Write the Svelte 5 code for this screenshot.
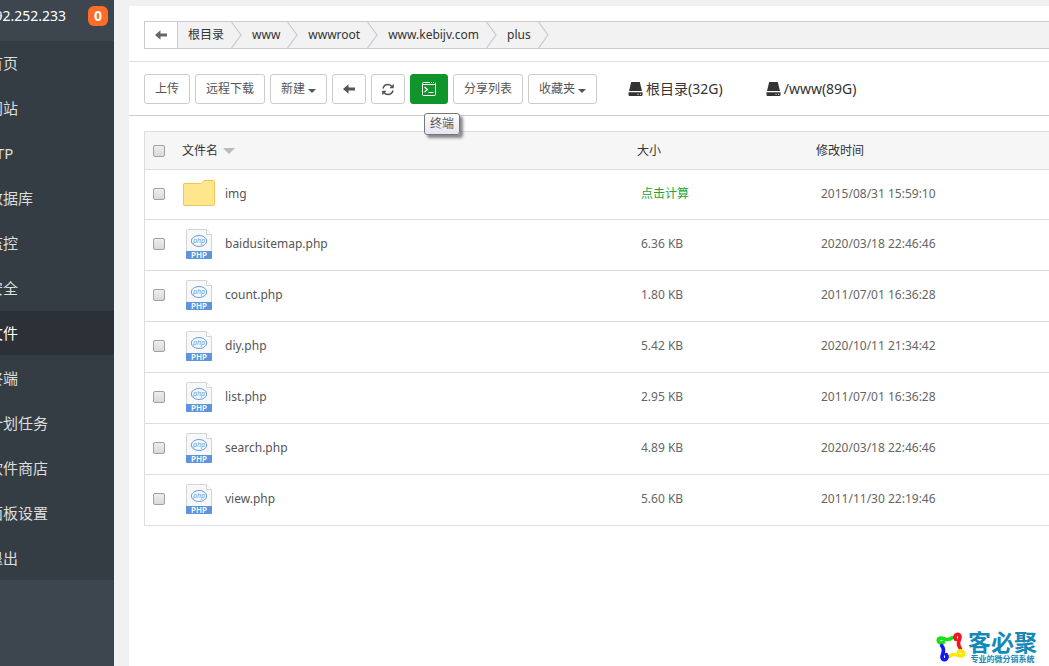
<script lang="ts">
	interface FileRow {
		name: string;
		dir?: boolean;
		size?: string;
		time: string;
	}

	const MENU = ['首页', '网站', 'FTP', '数据库', '监控', '安全', '文件', '终端', '计划任务', '软件商店', '面板设置', '退出'];

	const CRUMBS = ['根目录', 'www', 'wwwroot', 'www.kebijv.com', 'plus'];

	const DISKS = ['根目录(32G)', '/www(89G)'];

	const FILES: FileRow[] = [
		{ name: 'img', dir: true, time: '2015/08/31 15:59:10' },
		{ name: 'baidusitemap.php', size: '6.36 KB', time: '2020/03/18 22:46:46' },
		{ name: 'count.php', size: '1.80 KB', time: '2011/07/01 16:36:28' },
		{ name: 'diy.php', size: '5.42 KB', time: '2020/10/11 21:34:42' },
		{ name: 'list.php', size: '2.95 KB', time: '2011/07/01 16:36:28' },
		{ name: 'search.php', size: '4.89 KB', time: '2020/03/18 22:46:46' },
		{ name: 'view.php', size: '5.60 KB', time: '2011/11/30 22:19:46' },
	];

	// one arm of the pinwheel logo, turned a quarter for each colour
	const LOGO_ARM = 'M40 52C30 58 20 48 27 41C38 32 48 54 67 38';
	const LOGO_COLORS = ['#16e016', '#ee1620', '#ffe800', '#1616f0'];

	let current = $state('文件');
	let selected = $state<string[]>([]);

	function toggleAll() {
		selected = selected.length === FILES.length ? [] : FILES.map((f) => f.name);
	}
</script>

{#snippet arrowLeft()}
	<svg width="12" height="10" viewBox="0 0 12 10" fill="currentColor">
		<path d="M0 5L5.5 0.2V3.4H12V6.6H5.5V9.8Z" />
	</svg>
{/snippet}

<div class="layout">
	<aside class="sidebar">
		<div class="host">
			<span class="ip">92.252.233</span>
			<span class="badge">0</span>
		</div>
		<nav class="menu">
			{#each MENU as item}
				<a href="#{item}" class:active={current === item} onclick={() => (current = item)}>{item}</a>
			{/each}
		</nav>
	</aside>

	<main class="content">
		<div class="path-bar">
			<div class="path">
				<button class="path-back" aria-label="返回">{@render arrowLeft()}</button>
				{#each CRUMBS as crumb}
					<a class="crumb" href="#{crumb}">{crumb}</a>
					<svg class="chevron" width="11" height="26" viewBox="0 0 11 26" fill="none" stroke="#c9c9d3" stroke-width="1.2">
						<path d="M0.5 0L10 13L0.5 26" />
					</svg>
				{/each}
			</div>
		</div>

		<div class="toolbar">
			<button class="btn">上传</button>
			<button class="btn">远程下载</button>
			<button class="btn">新建<span class="caret"></span></button>
			<button class="btn" aria-label="后退">{@render arrowLeft()}</button>
			<button class="btn" aria-label="刷新">
				<svg width="12" height="13" viewBox="0 0 12 13" fill="none" stroke="currentColor" stroke-width="1.5">
					<path d="M1 5.5C1.6 3.2 3.5 1.6 6 1.6C7.8 1.6 9.2 2.4 10.2 3.8" />
					<path d="M11 7.5C10.4 9.8 8.5 11.4 6 11.4C4.2 11.4 2.8 10.6 1.8 9.2" />
					<path d="M11.8 0.8V5.2H7.4ZM0.2 12.2V7.8H4.6Z" fill="currentColor" stroke="none" />
				</svg>
			</button>
			<div class="terminal">
				<button class="btn btn-green" aria-label="终端">
					<svg width="16" height="16" viewBox="0 0 16 16" fill="none" stroke="currentColor">
						<rect x="1.5" y="1.5" width="13" height="13" rx="1" />
						<path d="M1.5 3.5H14.5" />
						<path d="M9 1.5H10M11 1.5H12M13 1.5H14" stroke="#10952a" />
						<path d="M3.5 6L6.5 8.5L3.5 11M7.5 11.5H12.5" stroke-width="1.2" />
					</svg>
				</button>
				<span class="tooltip" role="tooltip">终端</span>
			</div>
			<button class="btn">分享列表</button>
			<button class="btn">收藏夹<span class="caret"></span></button>
			<div class="disks">
				{#each DISKS as disk}
					<a class="disk" href="#{disk}">
						<svg width="15" height="14" viewBox="0 0 15 14" fill="#333">
							<path d="M3.2 0H11.8L14 9H1Z" />
							<path d="M0.5 10.2H14.5V13Q14.5 14 13.5 14H1.5Q0.5 14 0.5 13Z" />
							<path d="M9.5 11.8H10.6V12.8H9.5ZM12 11.8H13.1V12.8H12Z" fill="#fff" />
						</svg>
						{disk}
					</a>
				{/each}
			</div>
		</div>

		<div class="list">
			<table>
				<thead>
					<tr>
						<th class="col-check">
							<input type="checkbox" aria-label="全选" checked={selected.length === FILES.length} onchange={toggleAll} />
						</th>
						<th class="col-name">文件名<span class="sort"></span></th>
						<th class="col-size">大小</th>
						<th>修改时间</th>
					</tr>
				</thead>
				<tbody>
					{#each FILES as file}
						<tr class:dir={file.dir}>
							<td class="col-check">
								<input type="checkbox" aria-label={file.name} value={file.name} bind:group={selected} />
							</td>
							<td>
								<div class="file">
									{#if file.dir}
										<svg width="32" height="28" viewBox="0 0 32 28" fill="#ffe68c" stroke="#efc55c">
											<path d="M1.5 3.5H17.5Q18.5 3.5 19.2 2.5L20 1.5Q20.5 0.5 21.5 0.5H30.5Q31.5 0.5 31.5 1.5V24.5Q31.5 25.5 30.5 25.5H1.5Q0.5 25.5 0.5 24.5V4.5Q0.5 3.5 1.5 3.5Z" />
										</svg>
									{:else}
										<svg width="32" height="30" viewBox="0 0 32 30">
											<path d="M4.5 0.5H23.5L28.5 5.5V29.5H3.5V1.5Q3.5 0.5 4.5 0.5Z" fill="#f8f8f8" stroke="#d4d4d4" />
											<path d="M23.5 0.5V5.5H28.5" fill="#fff" stroke="#d4d4d4" />
											<ellipse cx="16" cy="12" rx="7.7" ry="5.5" fill="#f4f8fd" stroke="#6c9cdb" />
											<text x="16" y="14" class="php-mark">php</text>
											<path d="M3 22H29V29Q29 30 28 30H4Q3 30 3 29Z" fill="#5d94db" />
											<text x="16" y="29" class="php-label">PHP</text>
										</svg>
									{/if}
									<a href="#{file.name}">{file.name}</a>
								</div>
							</td>
							<td class="size">
								{#if file.size}{file.size}{:else}<a href="#size">点击计算</a>{/if}
							</td>
							<td class="time">{file.time}</td>
						</tr>
					{/each}
				</tbody>
			</table>
		</div>
	</main>

	<div class="watermark">
		<svg width="30" height="32" viewBox="18 18 90 96" fill="none" stroke-width="11" stroke-linecap="round">
			{#each LOGO_COLORS as color, i}
				<path d={LOGO_ARM} stroke={color} transform="rotate({i * 90} 63 66)" />
			{/each}
		</svg>
		<div>
			<div class="brand">客必聚</div>
			<div class="slogan">专业的微分销系统</div>
		</div>
	</div>
</div>

<style>
	:global(body) {
		background: #f1f1f1;
	}

	.layout {
		position: relative;
		display: flex;
		min-height: 100vh;
		overflow: hidden;
		font-family: 'Noto Sans', 'Noto Sans CJK SC', sans-serif;
		font-size: 12px;
		line-height: 20px;
		color: #333;
	}

	a {
		color: inherit;
		text-decoration: none;
	}

	button {
		font-family: inherit;
		font-size: 12px;
		line-height: 20px;
		cursor: pointer;
	}

	.sidebar {
		width: 114px;
		flex-shrink: 0;
		overflow: hidden;
		background: #3d454f;
	}

	.host {
		display: flex;
		align-items: center;
		justify-content: flex-end;
		gap: 22px;
		height: 32px;
		padding: 0 6px 9px 0;
		color: #fff;
	}

	.ip {
		flex-shrink: 0;
		font-size: 14px;
	}

	.badge {
		flex-shrink: 0;
		width: 20px;
		border-radius: 6px;
		background: #ff6c24;
		font-size: 14px;
		font-weight: 700;
		text-align: center;
	}

	/* the menu runs off the left edge of the window */
	.menu {
		margin-left: -12px;
		background: #353d44;
	}

	.menu a {
		display: block;
		height: 44px;
		margin-bottom: 1px;
		font-size: 15px;
		line-height: 44px;
		color: #ddd;
	}

	.menu a:last-child {
		margin-bottom: 0;
	}

	.menu a.active {
		background: #2c3138;
		color: #fff;
	}

	.content {
		flex: 1;
		min-width: 0;
		margin: 6px 0 0 15px;
		background: #fff;
	}

	.path-bar {
		padding: 15px 0 12px 15px;
		border-bottom: 1px solid #ddd;
	}

	.path {
		display: flex;
		align-items: center;
		height: 26px;
		border: 1px solid #ccc;
		border-right: 0;
		background: #f2f2f2;
	}

	.path-back {
		display: flex;
		align-items: center;
		justify-content: center;
		width: 33px;
		height: 26px;
		padding: 0;
		border: 0;
		border-right: 1px solid #ccc;
		background: #fff;
		color: #666;
	}

	.crumb {
		padding: 0 7px 0 10px;
	}

	.chevron {
		flex-shrink: 0;
	}

	.toolbar {
		display: flex;
		align-items: center;
		gap: 5px;
		padding: 12px 0 11px 15px;
		border-bottom: 1px solid #ccc;
	}

	.btn {
		display: flex;
		align-items: center;
		justify-content: center;
		height: 30px;
		padding: 0 10px;
		border: 1px solid #ccc;
		border-radius: 3px;
		background: #fff;
		color: #555;
		white-space: nowrap;
	}

	.btn-green {
		border-color: #10952a;
		background: #10952a;
		color: #fff;
	}

	.caret {
		margin: 3px 0 0 3px;
		border: 4px solid transparent;
		border-top-color: #555;
		border-bottom: 0;
	}

	.terminal {
		position: relative;
	}

	.tooltip {
		position: absolute;
		top: 39px;
		left: 14px;
		padding: 0 5px;
		border: 1px solid #767676;
		border-radius: 3px;
		background: linear-gradient(#fff, #e4e5f0);
		box-shadow: 3px 3px 3px rgba(0, 0, 0, 0.45);
		color: #575757;
		white-space: nowrap;
	}

	.disks {
		display: flex;
		gap: 43px;
		margin-left: 26px;
	}

	.disk {
		display: flex;
		align-items: center;
		gap: 3px;
		font-size: 14px;
		white-space: nowrap;
	}

	.list {
		padding: 15px 0 0 15px;
	}

	table {
		width: 100%;
		border: 1px solid #ddd;
		border-right: 0;
		border-collapse: collapse;
		table-layout: fixed;
	}

	th {
		height: 37px;
		padding: 0;
		background: #f6f6f6;
		font-weight: 400;
		text-align: left;
	}

	td {
		height: 48px;
		padding: 0 0 2px;
		border-top: 1px solid #ddd;
	}

	.dir td {
		height: 47px;
	}

	.col-check {
		width: 37px;
	}

	.col-name {
		width: 455px;
	}

	.col-size {
		width: 179px;
	}

	input {
		display: block;
		appearance: none;
		width: 12px;
		height: 12px;
		margin: 0 0 0 8px;
		border: 1px solid #a0a0a0;
		border-radius: 2px;
		background: linear-gradient(#eee, #d9d9d9);
	}

	input:checked {
		background: #20a53a;
	}

	.sort {
		display: inline-block;
		margin-left: 5px;
		border: 6px solid transparent;
		border-top-color: #bbb;
		border-bottom: 0;
		vertical-align: 1px;
	}

	.file {
		display: flex;
		align-items: center;
		gap: 10px;
		padding-left: 1px;
		color: #555;
	}

	td.size {
		padding-left: 4px;
		color: #666;
	}

	.size a {
		color: #20a53a;
	}

	td.time {
		padding-left: 5px;
		color: #666;
	}

	.php-mark {
		fill: #6c9cdb;
		font-size: 7px;
		font-style: italic;
		text-anchor: middle;
	}

	.php-label {
		fill: #fff;
		font-size: 8px;
		font-weight: 600;
		text-anchor: middle;
	}

	.watermark {
		position: absolute;
		right: 12px;
		bottom: 3px;
		display: flex;
		align-items: center;
		gap: 2px;
		color: #1488b8;
		font-weight: 700;
	}

	.brand {
		font-size: 23px;
		line-height: 24px;
	}

	.slogan {
		font-size: 8px;
		line-height: 9px;
		text-align: center;
	}
</style>
